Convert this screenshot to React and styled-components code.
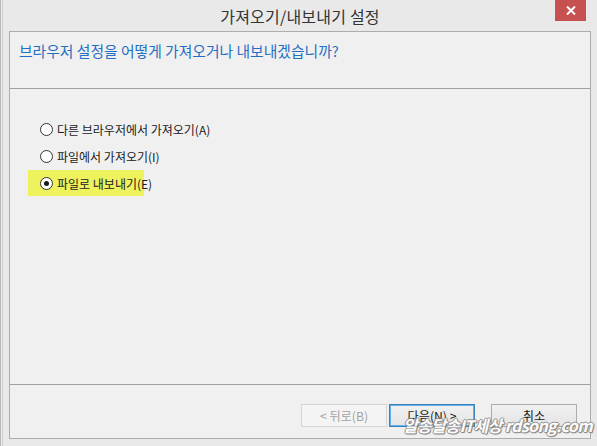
import React from "react";
import styled, { createGlobalStyle } from "styled-components";

const Global = createGlobalStyle`
  html, body { margin: 0; padding: 0; background: #e8e8e8; }
  body { font-family: "Noto Sans CJK KR", "Noto Sans", sans-serif; }
`;

const Window = styled.div`
  position: relative;
  width: 597px;
  height: 446px;
  box-sizing: border-box;
  background: #e9e9e9;
  border-left: 1px solid #b9b9b9;
  padding-left: 1px;
  display: flex;
  flex-direction: column;
  overflow: hidden;
`;

const Frame = styled.div`
  flex: 1;
  display: flex;
  flex-direction: column;
  border-left: 1px solid #d2d2d2;
  padding: 0 6px 7px 6px;
`;

const TitleBar = styled.div`
  position: relative;
  height: 31px;
  display: flex;
  align-items: center;
  justify-content: center;
  font-size: 16px;
  color: #333;
  letter-spacing: 0.2px;
`;

const Close = styled.div`
  position: absolute;
  top: 0;
  right: 5px;
  width: 31px;
  height: 21px;
  background: #c75050;
  display: flex;
  align-items: center;
  justify-content: center;
`;

const Panel = styled.div`
  flex: 1;
  display: flex;
  flex-direction: column;
  background: #f0f0f0;
  border: 1px solid #adadad;
`;

const Header = styled.div`
  height: 57px;
  box-sizing: border-box;
  padding: 8px 0 0 9px;
  font-size: 14.8px;
  color: #1f6fc5;
  border-bottom: 1px solid #a0a0a0;
`;

const Body = styled.div`
  flex: 1;
  display: flex;
  flex-direction: column;
  gap: 7px;
  padding: 30px 0 0 30px;
  border-bottom: 1px solid #a0a0a0;
`;

const Option = styled.label`
  position: relative;
  display: flex;
  align-items: center;
  gap: 4px;
  height: 20px;
  font-size: 12px;
  color: #1a1a1a;
`;

const Highlight = styled.div`
  position: absolute;
  left: -12px;
  top: -3px;
  width: 116px;
  height: 26px;
  background: #eef25c;
`;

const Radio = styled.span`
  position: relative;
  width: 11px;
  height: 11px;
  border: 1px solid #333;
  border-radius: 50%;
  background: #fff;
  display: flex;
  align-items: center;
  justify-content: center;
  &::after {
    content: "";
    width: 5px;
    height: 5px;
    border-radius: 50%;
    background: #1a1a1a;
    display: ${(p) => (p.checked ? "block" : "none")};
  }
`;

const Label = styled.span`
  position: relative;
`;

const Footer = styled.div`
  height: 53px;
  box-sizing: border-box;
  display: flex;
  align-items: flex-start;
  justify-content: flex-end;
  padding: 19px 13px 0 0;
`;

const Button = styled.div`
  width: 86px;
  height: 23px;
  box-sizing: border-box;
  display: flex;
  align-items: center;
  justify-content: center;
  font-size: 12.2px;
  margin-left: ${(p) => p.gap || 0}px;
  color: ${(p) => (p.disabled ? "#a3a3a3" : "#1a1a1a")};
  background: ${(p) =>
    p.disabled ? "#f4f4f4" : "linear-gradient(#f0f0f0, #e5e5e5)"};
  border: 1px solid
    ${(p) => (p.disabled ? "#d5d5d5" : p.primary ? "#3c7fb1" : "#acacac")};
  box-shadow: ${(p) => (p.primary ? "inset 0 0 0 1px #69b0ef" : "none")};
`;

const Watermark = styled.div`
  position: absolute;
  right: 5px;
  bottom: 9px;
  font-family: "Noto Sans CJK KR", sans-serif;
  font-weight: 700;
  font-style: italic;
  font-size: 16px;
  letter-spacing: -0.6px;
  color: #fff;
  text-shadow: 1px 0 0 #8a8a8a, -1px 0 0 #8a8a8a, 0 1px 0 #8a8a8a,
    0 -1px 0 #8a8a8a, 1px 1px 1px #666;
  opacity: 0.92;
`;

export default function App() {
  return (
    <>
      <Global />
      <Window>
        <Frame>
          <TitleBar>
            가져오기/내보내기 설정
            <Close>
              <svg width="10" height="9" viewBox="0 0 10 9">
                <path d="M1 0.5 L9 8.5 M9 0.5 L1 8.5" stroke="#fff" strokeWidth="2" />
              </svg>
            </Close>
          </TitleBar>
          <Panel>
            <Header>브라우저 설정을 어떻게 가져오거나 내보내겠습니까?</Header>
            <Body>
              <Option>
                <Radio />
                <Label>다른 브라우저에서 가져오기(A)</Label>
              </Option>
              <Option>
                <Radio />
                <Label>파일에서 가져오기(I)</Label>
              </Option>
              <Option>
                <Highlight />
                <Radio checked />
                <Label>파일로 내보내기(E)</Label>
              </Option>
            </Body>
            <Footer>
              <Button disabled>&lt; 뒤로(B)</Button>
              <Button primary gap={2}>다음(N) &gt;</Button>
              <Button gap={16}>취소</Button>
            </Footer>
          </Panel>
        </Frame>
        <Watermark>알송달송IT세상 rdsong.com</Watermark>
      </Window>
    </>
  );
}
